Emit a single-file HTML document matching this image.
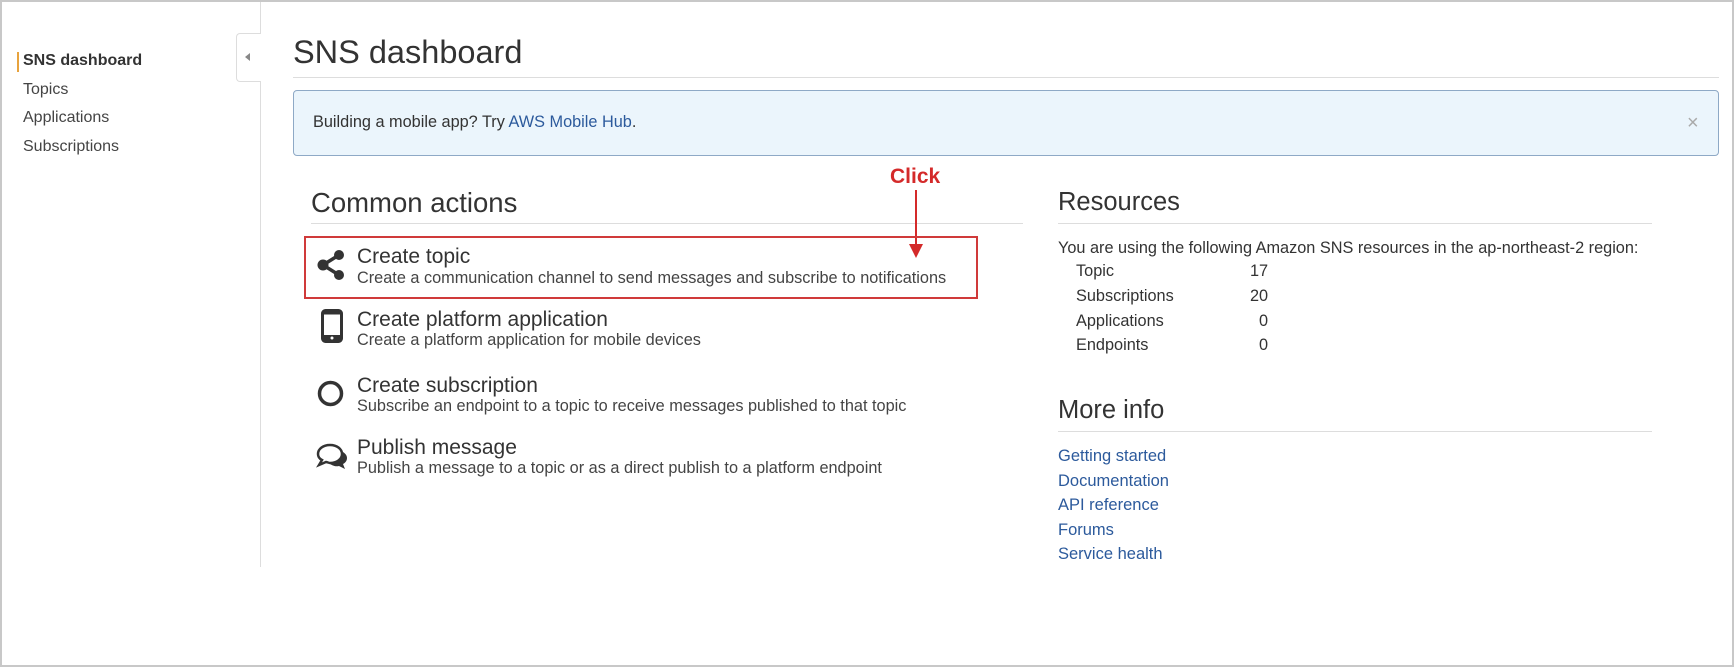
<!DOCTYPE html>
<html><head><meta charset="utf-8"><style>
*{margin:0;padding:0;box-sizing:border-box}
body{width:1734px;height:667px;background:#fff;font-family:"Liberation Sans",Arial,sans-serif;color:#333;position:relative;overflow:hidden}
.a{position:absolute;white-space:nowrap;line-height:1}
.frame{position:absolute;left:0;top:0;width:1734px;height:667px;border:2px solid #c8c8c8}
.nav{font-size:16px;color:#444;left:23px}
.t{font-size:21px;color:#333;left:357px}
.d{font-size:16.3px;color:#444;left:357px}
.r{font-size:16.3px;color:#333}
.l{font-size:16.5px;color:#2c5a9c;left:1058px}
.rule{position:absolute;height:1px;background:#ddd}
</style></head><body>
<div class="frame"></div>
<div style="position:absolute;left:17px;top:52px;width:2px;height:20px;background:#e8a33d"></div>
<div class="a nav" style="top:53px;font-weight:bold;color:#333">SNS dashboard</div>
<div class="a nav" style="top:82px">Topics</div>
<div class="a nav" style="top:110px">Applications</div>
<div class="a nav" style="top:139px">Subscriptions</div>
<div style="position:absolute;left:260px;top:2px;width:1px;height:565px;background:#ddd"></div>
<div style="position:absolute;left:236px;top:33px;width:25px;height:49px;border:1px solid #ddd;border-right:none;border-radius:4px 0 0 4px;background:#fff"></div>
<div style="position:absolute;left:245px;top:53px;width:0;height:0;border-top:4px solid transparent;border-bottom:4px solid transparent;border-right:5px solid #888"></div>
<div class="a" style="left:293px;top:36px;font-size:32.5px;color:#333">SNS dashboard</div>
<div class="rule" style="left:293px;top:77px;width:1426px"></div>
<div style="position:absolute;left:293px;top:90px;width:1426px;height:66px;background:#ebf5fc;border:1px solid #8ea9c6;border-radius:4px"></div>
<div class="a" style="left:313px;top:114px;font-size:16.3px;color:#333">Building a mobile app? Try <span style="color:#2c5a9c">AWS Mobile Hub</span>.</div>
<div class="a" style="left:1687px;top:113px;font-size:20px;color:#aaa">×</div>

<div class="a" style="left:311px;top:189px;font-size:27.5px;color:#333">Common actions</div>
<div class="rule" style="left:311px;top:223px;width:712px"></div>
<div class="a" style="left:890px;top:166px;font-size:21px;font-weight:bold;color:#d42a2a">Click</div>
<div style="position:absolute;left:915px;top:190px;width:2px;height:56px;background:#d42a2a"></div>
<div style="position:absolute;left:909px;top:244px;border-left:7px solid transparent;border-right:7px solid transparent;border-top:14px solid #d42a2a"></div>
<div style="position:absolute;left:304px;top:236px;width:674px;height:63px;border:2px solid #d03a3a"></div>

<svg style="position:absolute;left:317px;top:250px" width="28" height="30" viewBox="0 0 28 30"><g fill="#333"><circle cx="22" cy="5" r="5"/><circle cx="6" cy="15" r="5.5"/><circle cx="22" cy="25" r="5"/></g><path d="M22 5L6 15L22 25" stroke="#333" stroke-width="3.5" fill="none"/></svg>
<div class="a t" style="top:246px">Create topic</div>
<div class="a d" style="top:270px">Create a communication channel to send messages and subscribe to notifications</div>

<svg style="position:absolute;left:321px;top:309px" width="22" height="34" viewBox="0 0 22 34"><rect x="1.5" y="1.5" width="19" height="31" rx="3" fill="none" stroke="#333" stroke-width="3"/><rect x="1.5" y="26" width="19" height="6.5" fill="#333"/><rect x="1.5" y="1.5" width="19" height="4" fill="#333"/><circle cx="11" cy="29" r="1.5" fill="#fff"/></svg>
<div class="a t" style="top:309px">Create platform application</div>
<div class="a d" style="top:332px">Create a platform application for mobile devices</div>

<svg style="position:absolute;left:317px;top:380px" width="27" height="27"><circle cx="13.5" cy="13.5" r="11" fill="none" stroke="#333" stroke-width="3.5"/></svg>
<div class="a t" style="top:375px">Create subscription</div>
<div class="a d" style="top:398px">Subscribe an endpoint to a topic to receive messages published to that topic</div>

<svg style="position:absolute;left:316px;top:442px" width="33" height="30" viewBox="0 0 33 30"><path d="M14 3C7 3 2 7 2 12c0 3 2 5 4 6l-3 5 7-3c1 0 3 1 4 1 7 0 12-4 12-9S21 3 14 3z" fill="none" stroke="#333" stroke-width="2.5"/><path d="M27 10c3 2 4 4 4 6 0 3-2 5-4 6l2 5-6-3c-4 1-8-1-10-3 7 0 12-4 14-11z" fill="#333"/></svg>
<div class="a t" style="top:437px">Publish message</div>
<div class="a d" style="top:460px">Publish a message to a topic or as a direct publish to a platform endpoint</div>

<div class="a" style="left:1058px;top:190px;font-size:25.5px;color:#333">Resources</div>
<div class="rule" style="left:1058px;top:223px;width:594px"></div>
<div class="a r" style="left:1058px;top:240px">You are using the following Amazon SNS resources in the ap-northeast-2 region:</div>
<div class="a r" style="left:1076px;top:263px">Topic</div><div class="a r" style="left:1250px;top:263px">17</div>
<div class="a r" style="left:1076px;top:288px">Subscriptions</div><div class="a r" style="left:1250px;top:288px">20</div>
<div class="a r" style="left:1076px;top:313px">Applications</div><div class="a r" style="left:1259px;top:313px">0</div>
<div class="a r" style="left:1076px;top:337px">Endpoints</div><div class="a r" style="left:1259px;top:337px">0</div>

<div class="a" style="left:1058px;top:398px;font-size:25.5px;color:#333">More info</div>
<div class="rule" style="left:1058px;top:431px;width:594px"></div>
<div class="a l" style="top:448px">Getting started</div>
<div class="a l" style="top:473px">Documentation</div>
<div class="a l" style="top:497px">API reference</div>
<div class="a l" style="top:522px">Forums</div>
<div class="a l" style="top:546px">Service health</div>
</body></html>
